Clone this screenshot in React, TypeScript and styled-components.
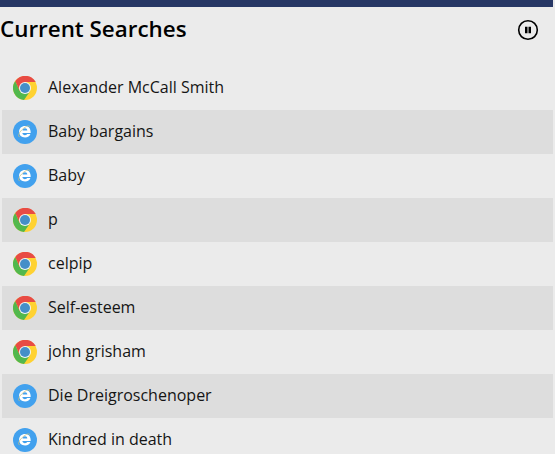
import React from "react";
import styled, { createGlobalStyle } from "styled-components";

const GlobalStyle = createGlobalStyle`
  *, *::before, *::after { box-sizing: border-box; }
  body {
    margin: 0;
    background: #ebebeb;
    color: #151515;
    font-family: "Open Sans", "Noto Sans", sans-serif;
    overflow: hidden;
  }
`;

const Panel = styled.main`
  width: 555px;
  height: 454px;
  overflow: hidden;
  background: #ebebeb;
`;

const TopBar = styled.div`
  width: 553px;
  height: 7px;
  background: #273765;
`;

const Header = styled.header`
  display: flex;
  align-items: center;
  justify-content: space-between;
  height: 59px;
  padding: 0 16px 14px 0;
`;

const Title = styled.h1`
  margin: 0;
  padding-bottom: 1px;
  color: #000;
  font-size: 22.4px;
  font-weight: 600;
  line-height: 32px;
  white-space: nowrap;
`;

const PauseButton = styled.button`
  display: flex;
  width: 22px;
  height: 22px;
  margin-top: 1px;
  padding: 0;
  border: 0;
  background: none;
`;

const SearchList = styled.ul`
  margin: 0 2px;
  padding: 0;
  list-style: none;
`;

const SearchRow = styled.li<{ $shaded: boolean }>`
  display: flex;
  align-items: center;
  gap: 11px;
  height: 44px;
  padding-left: 11px;
  background: ${({ $shaded }) => ($shaded ? "#dddddd" : "transparent")};
`;

const Term = styled.span`
  padding-bottom: 2px;
  font-size: 16px;
  line-height: 22px;
  white-space: nowrap;
`;

const BrowserIcon = styled.svg`
  display: block;
  flex: none;
  width: 24px;
  height: 24px;
`;

function ChromeIcon() {
  return (
    <BrowserIcon viewBox="0 0 24 24" aria-label="Chrome">
      <circle cx="12" cy="12" r="12" fill="#ffd232" />
      <path d="M12 12 6.8 15 2.3 5A12 12 0 0 0 11 24l6.2-9z" fill="#52b84d" />
      <path d="M12 6H22.7A12 12 0 0 0 2.3 5L6.8 15 12 12z" fill="#e84b44" />
      <circle cx="12" cy="12" r="6" fill="#f4f5f6" />
      <circle cx="12" cy="12" r="5" fill="#458fc8" />
    </BrowserIcon>
  );
}

function ExplorerIcon() {
  return (
    <BrowserIcon viewBox="0 0 24 24" aria-label="Internet Explorer">
      <circle cx="12" cy="12" r="12" fill="#42a1ee" />
      <path
        d="M17.7 13H9.4C9.5 14.4 10.5 15.2 12 15.2c1 0 1.800-.4 2.200-1.100h3.200c-.7 2.100-2.600 3.400-5.300 3.400-3.700 0-6-2.200-6-5.700S8.500 6 12.100 6s5.700 2.300 5.600 7zM14.300 10.600C14.200 9.100 13.400 8.300 12 8.300s-2.300.9-2.500 2.300z"
        fill="#fff"
        fillRule="evenodd"
      />
      <path
        d="M16.700 7c.1-1.400-1.300-1.500-3.200-.6C10 8.100 6.500 11.800 5.600 14.700c-.4 1.500.1 2.100 1.200 1.900"
        fill="none"
        stroke="#c5bd78"
        strokeWidth="0.7"
      />
    </BrowserIcon>
  );
}

type Browser = "chrome" | "explorer";

const searches: { term: string; browser: Browser }[] = [
  { term: "Alexander McCall Smith", browser: "chrome" },
  { term: "Baby bargains", browser: "explorer" },
  { term: "Baby", browser: "explorer" },
  { term: "p", browser: "chrome" },
  { term: "celpip", browser: "chrome" },
  { term: "Self-esteem", browser: "chrome" },
  { term: "john grisham", browser: "chrome" },
  { term: "Die Dreigroschenoper", browser: "explorer" },
  { term: "Kindred in death", browser: "explorer" },
];

export default function App() {
  return (
    <>
      <GlobalStyle />
      <Panel>
        <TopBar />
        <Header>
          <Title>Current Searches</Title>
          <PauseButton aria-label="Pause">
            <svg width="22" height="22" viewBox="0 0 22 22">
              <circle cx="11" cy="11" r="9.3" fill="none" stroke="#000" strokeWidth="1.6" />
              <path d="M8 7.8h2.5v6.4H8zM11.5 7.8H14v6.4h-2.5z" fill="#000" />
            </svg>
          </PauseButton>
        </Header>
        <SearchList>
          {searches.map(({ term, browser }, i) => (
            <SearchRow key={term} $shaded={i % 2 === 1}>
              {browser === "chrome" ? <ChromeIcon /> : <ExplorerIcon />}
              <Term>{term}</Term>
            </SearchRow>
          ))}
        </SearchList>
      </Panel>
    </>
  );
}
